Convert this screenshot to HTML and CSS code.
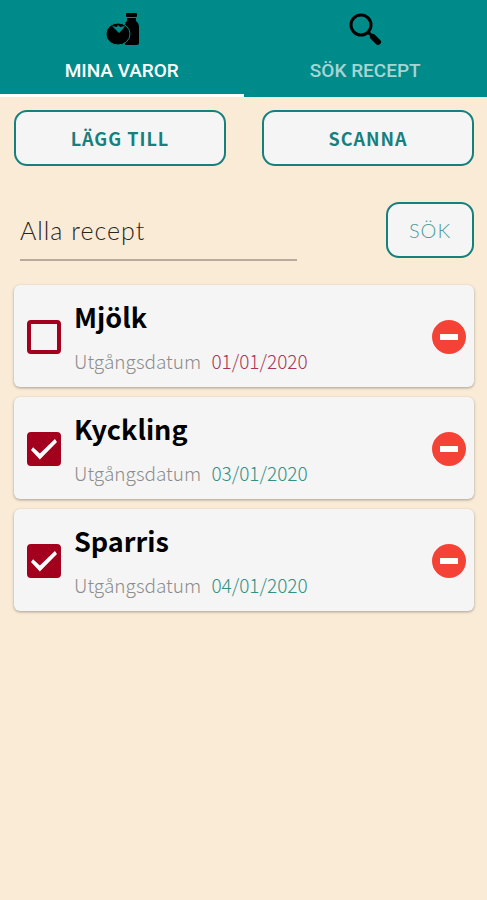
FILE: index.html
```html
<!DOCTYPE html>
<html lang="sv">
<head>
<meta charset="utf-8">
<meta name="viewport" content="width=device-width, initial-scale=1">
<title>Mina varor</title>
<link rel="stylesheet" href="styles.css">
</head>
<body>
<nav class="tabs">
  <a class="tab tab-active" href="#varor">
    <svg class="tab-icon" viewBox="-1 0 34 34" aria-hidden="true">
      <rect x="20" y="1" width="11" height="4" rx="1"/>
      <path d="M21 6h9v3q3 2 3 6v16q0 2-2 2H19V13q0-3 2-4z"/>
      <ellipse class="tomato" cx="12" cy="22" rx="12" ry="11"/>
      <path class="leaf" d="M6 14l5 1 1-2 2 2 5-1-3 4-3 3-3-3z"/>
    </svg>
    <span>MINA VAROR</span>
  </a>
  <a class="tab" href="#recept">
    <svg class="tab-icon" viewBox="-1 -1 34 34" aria-hidden="true">
      <circle class="lens" cx="12" cy="12" r="10"/>
      <path class="neck" d="M19 19l5 5"/>
      <path class="handle" d="M24 24l5 5"/>
    </svg>
    <span>SÖK RECEPT</span>
  </a>
</nav>
<main class="content">
  <div class="actions">
    <button class="button" type="button">LÄGG TILL</button>
    <button class="button" type="button">SCANNA</button>
  </div>
  <form class="search">
    <input class="search-input" type="text" value="Alla recept" aria-label="Sök bland recept">
    <button class="button button-search" type="button">SÖK</button>
  </form>
  <ul class="items">
    <li class="card">
      <input class="check" type="checkbox" id="mjolk">
      <div class="info">
        <label class="name" for="mjolk">Mjölk</label>
        <p class="date">Utgångsdatum <time class="expired" datetime="2020-01-01">01/01/2020</time></p>
      </div>
      <button class="remove" type="button" aria-label="Ta bort Mjölk"></button>
    </li>
    <li class="card">
      <input class="check" type="checkbox" id="kyckling" checked>
      <div class="info">
        <label class="name" for="kyckling">Kyckling</label>
        <p class="date">Utgångsdatum <time datetime="2020-01-03">03/01/2020</time></p>
      </div>
      <button class="remove" type="button" aria-label="Ta bort Kyckling"></button>
    </li>
    <li class="card">
      <input class="check" type="checkbox" id="sparris" checked>
      <div class="info">
        <label class="name" for="sparris">Sparris</label>
        <p class="date">Utgångsdatum <time datetime="2020-01-04">04/01/2020</time></p>
      </div>
      <button class="remove" type="button" aria-label="Ta bort Sparris"></button>
    </li>
  </ul>
</main>
</body>
</html>
```
FILE: styles.css
```css
* {
  box-sizing: border-box;
}

body {
  margin: 0;
  min-height: 100vh;
  background: #faebd7;
  font-family: "Noto Sans CJK JP", sans-serif;
}

.tabs {
  display: grid;
  grid-template-columns: 1fr 1fr;
  background: #008b8b;
}

.tab {
  display: flex;
  flex-direction: column;
  align-items: center;
  gap: 13px;
  height: 97px;
  padding-top: 12px;
  border-bottom: 3px solid transparent;
  color: #a6d5d3;
  font: 500 19px/24px Roboto, sans-serif;
  text-decoration: none;
}

.tab-active {
  border-bottom-color: #fff;
  color: #fff;
}

.tab-icon {
  width: 34px;
  height: 34px;
}

.leaf {
  fill: #008b8b;
}

.tomato {
  stroke: #008b8b;
  stroke-width: 1;
}

.lens {
  fill: none;
  stroke: #000;
  stroke-width: 3;
}

.neck,
.handle {
  stroke: #000;
  stroke-width: 3;
}

.handle {
  stroke-width: 6;
  stroke-linecap: round;
}

.content {
  padding: 13px 13px 0 14px;
}

.actions {
  display: grid;
  grid-template-columns: 1fr 1fr;
  gap: 36px;
}

.button {
  height: 56px;
  padding: 0;
  border: 2px solid #16807d;
  border-radius: 13px;
  background: #f5f5f5;
  color: #16807d;
  font: 700 18px/24px "Noto Sans CJK JP", sans-serif;
  letter-spacing: 1px;
}

.search {
  display: flex;
  justify-content: space-between;
  margin-top: 36px;
}

.search-input {
  flex: 0 1 277px;
  min-width: 0;
  height: 59px;
  margin-left: 6px;
  padding: 0 0 2px;
  border: 0;
  border-bottom: 2px solid #baa99b;
  background: transparent;
  color: #29241f;
  font: 300 25px/28px Lato, sans-serif;
  letter-spacing: 1px;
}

.button-search {
  width: 88px;
  color: #4d9c97;
  font: 300 20px/24px Lato, sans-serif;
  letter-spacing: 1px;
}

.items {
  display: grid;
  gap: 10px;
  margin: 24px 0 0;
  padding: 0;
  list-style: none;
}

.card {
  display: flex;
  align-items: center;
  height: 102px;
  padding: 2px 8px 0 13px;
  border-radius: 6px;
  background: #f5f5f5;
  box-shadow: 0 1px 3px #00000055;
}

.check {
  appearance: none;
  display: grid;
  place-items: center;
  width: 34px;
  height: 34px;
  margin: 0;
  border: 4px solid #a2001d;
  border-radius: 4px;
}

.check:checked {
  background: #a2001d;
}

.check:checked::before {
  content: "";
  width: 26px;
  height: 26px;
  background: #fff;
  clip-path: polygon(0 54%, 8% 43%, 34% 67%, 92% 12%, 100% 23%, 34% 90%);
}

.info {
  flex: 1;
  padding-left: 13px;
}

.name {
  display: block;
  color: #000;
  font-size: 27px;
  font-weight: 700;
  line-height: 40px;
}

.date {
  margin: 8px 0 0;
  color: #8c8c8c;
  font-size: 19px;
  font-weight: 300;
  line-height: 32px;
}

.date time {
  margin-left: 6px;
  color: #329084;
}

.date .expired {
  color: #ab3558;
}

.remove {
  display: grid;
  place-items: center;
  width: 34px;
  height: 34px;
  padding: 0;
  border: 0;
  border-radius: 50%;
  background: #f44336;
}

.remove::before {
  content: "";
  width: 18px;
  height: 6px;
  background: #fff;
}
```
